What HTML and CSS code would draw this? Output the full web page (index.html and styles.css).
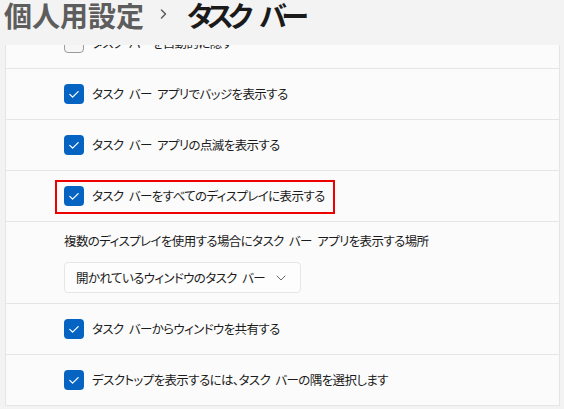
FILE: index.html
```html
<!DOCTYPE html>
<html lang="ja">
<head>
<meta charset="utf-8">
<title>タスク バー</title>
<link rel="stylesheet" href="styles.css">
</head>
<body>
<div class="page">
  <header class="titlebar">
    <span class="crumb parent">個人用設定</span>
    <svg class="crumb-sep" width="8" height="10" viewBox="0 0 8 10"><path d="M1.5 1 L5.5 5 L1.5 9" fill="none" stroke="#5c5c5c" stroke-width="1.5" stroke-linecap="round" stroke-linejoin="round"/></svg>
    <span class="crumb current">タスク バー</span>
  </header>
  <main class="viewport">
    <div class="card">
      <div class="row">
        <svg class="cb" width="20" height="20" viewBox="0 0 20 20"><rect x="0.5" y="0.5" width="19" height="19" rx="3.5" fill="#f6f6f6" stroke="#9b9b9b"/></svg>
        <span class="label">タスク バーを自動的に隠す</span>
      </div>
      <div class="row">
        <svg class="cb" width="20" height="20" viewBox="0 0 20 20"><rect width="20" height="20" rx="4" fill="#0563c1"/><path d="M5.8 10.4 L8.6 13.1 L14.2 7.6" fill="none" stroke="#fff" stroke-width="1.3" stroke-linecap="round" stroke-linejoin="round"/></svg>
        <span class="label">タスク バー アプリでバッジを表示する</span>
      </div>
      <div class="row">
        <svg class="cb" width="20" height="20" viewBox="0 0 20 20"><rect width="20" height="20" rx="4" fill="#0563c1"/><path d="M5.8 10.4 L8.6 13.1 L14.2 7.6" fill="none" stroke="#fff" stroke-width="1.3" stroke-linecap="round" stroke-linejoin="round"/></svg>
        <span class="label">タスク バー アプリの点滅を表示する</span>
      </div>
      <div class="row">
        <svg class="cb" width="20" height="20" viewBox="0 0 20 20"><rect width="20" height="20" rx="4" fill="#0563c1"/><path d="M5.8 10.4 L8.6 13.1 L14.2 7.6" fill="none" stroke="#fff" stroke-width="1.3" stroke-linecap="round" stroke-linejoin="round"/></svg>
        <span class="label">タスク バーをすべてのディスプレイに表示する</span>
        <div class="highlight"></div>
      </div>
      <div class="row multi">
        <span class="label">複数のディスプレイを使用する場合にタスク バー アプリを表示する場所</span>
        <div class="dropdown">
          <span class="dd-text">開かれているウィンドウのタスク バー</span>
          <svg class="dd-chev" width="10" height="6" viewBox="0 0 10 6"><path d="M1 1 L5 5 L9 1" fill="none" stroke="#6a6a6a" stroke-width="1" stroke-linecap="round" stroke-linejoin="round"/></svg>
        </div>
      </div>
      <div class="row">
        <svg class="cb" width="20" height="20" viewBox="0 0 20 20"><rect width="20" height="20" rx="4" fill="#0563c1"/><path d="M5.8 10.4 L8.6 13.1 L14.2 7.6" fill="none" stroke="#fff" stroke-width="1.3" stroke-linecap="round" stroke-linejoin="round"/></svg>
        <span class="label">タスク バーからウィンドウを共有する</span>
      </div>
      <div class="row">
        <svg class="cb" width="20" height="20" viewBox="0 0 20 20"><rect width="20" height="20" rx="4" fill="#0563c1"/><path d="M5.8 10.4 L8.6 13.1 L14.2 7.6" fill="none" stroke="#fff" stroke-width="1.3" stroke-linecap="round" stroke-linejoin="round"/></svg>
        <span class="label">デスクトップを表示するには、タスク バーの隅を選択します</span>
      </div>
    </div>
  </main>
</div>
</body>
</html>
```

FILE: styles.css
```css
html, body {
  margin: 0;
  padding: 0;
  height: 100%;
  overflow: hidden;
  background: #f3f3f3;
}

body {
  font-family: "Noto Sans CJK JP", "Noto Sans", sans-serif;
  font-feature-settings: "palt";
  color: #1b1b1b;
}

.page {
  display: flex;
  flex-direction: column;
  height: 409px;
}

.titlebar {
  position: relative;
  z-index: 2;
  height: 45px;
  flex: none;
  display: flex;
  align-items: flex-start;
  padding: 0 0 0 4px;
  background: #f3f3f3;
  box-sizing: border-box;
}

.crumb {
  font-size: 28px;
  line-height: 30px;
  font-weight: 600;
}

.crumb.parent {
  color: #5d5d5d;
}

.crumb-sep {
  margin: 9px 19px 0 16px;
}

.crumb.current {
  color: #1a1a1a;
  letter-spacing: -5.5px;
  word-spacing: 11px;
}

.viewport {
  flex: 1;
  overflow: hidden;
}

.card {
  margin: -27px 4px 0 5px;
  background: #fbfbfb;
  border-left: 1px solid #e5e5e5;
  border-right: 1px solid #e5e5e5;
}

.row {
  position: relative;
  height: 50px;
  display: flex;
  align-items: center;
  gap: 8px;
  padding-left: 58px;
  border-bottom: 1px solid #e5e5e5;
}

.cb {
  flex: none;
  display: block;
}

.label {
  font-size: 12.5px;
  line-height: 20px;
  letter-spacing: -0.6px;
  word-spacing: 3px;
  white-space: nowrap;
}

.highlight {
  position: absolute;
  left: 49px;
  top: 9px;
  width: 280px;
  height: 34px;
  box-sizing: border-box;
  border: 2px solid #ee0000;
}

.row.multi {
  height: auto;
  flex-direction: column;
  align-items: flex-start;
  gap: 11px;
  padding-top: 9px;
  padding-bottom: 10px;
}

.dropdown {
  width: 237px;
  height: 31px;
  box-sizing: border-box;
  display: flex;
  align-items: center;
  justify-content: space-between;
  padding: 0 14px 0 11px;
  background: #fdfdfd;
  border: 1px solid #e6e6e6;
  border-radius: 4px;
}

.dd-text {
  font-size: 12.5px;
  line-height: 20px;
  letter-spacing: -0.6px;
  word-spacing: 3px;
  white-space: nowrap;
}

.dd-chev {
  display: block;
}
```
